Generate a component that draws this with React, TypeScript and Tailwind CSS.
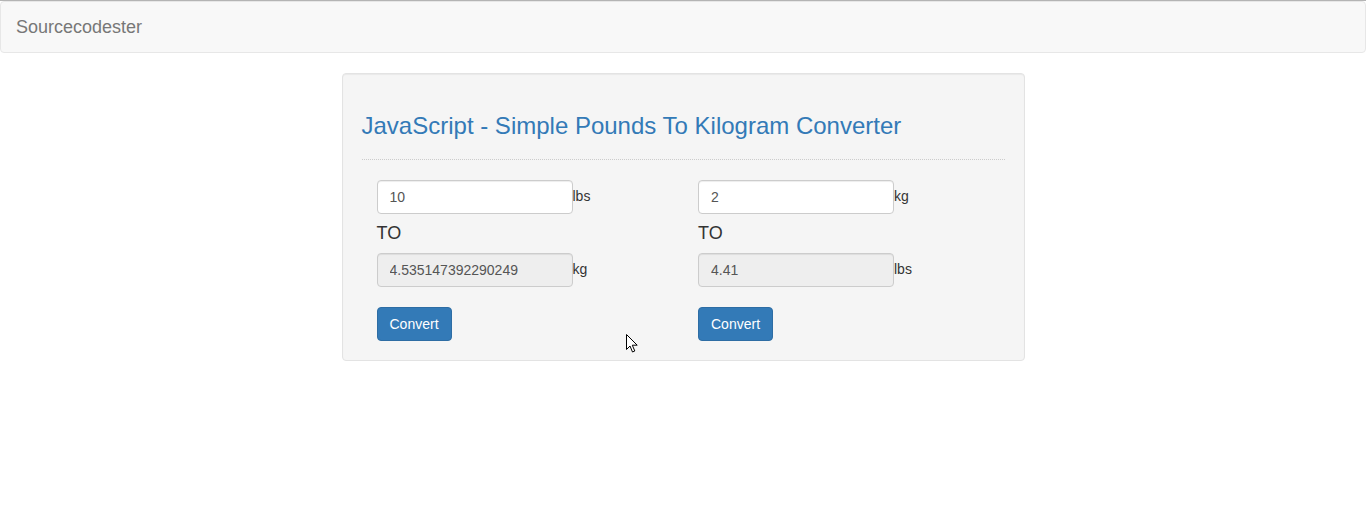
import { useState } from 'react';

type Side = {
  from: string;
  to: string;
  factor: number;
  initial: string;
  result: string;
};

const sides: Side[] = [
  { from: 'lbs', to: 'kg', factor: 0.45351473922902494, initial: '10', result: '4.535147392290249' },
  { from: 'kg', to: 'lbs', factor: 2.205, initial: '2', result: '4.41' },
];

function Converter({ side }: { side: Side }) {
  const [value, setValue] = useState(side.initial);
  const [result, setResult] = useState(side.result);

  const convert = () => {
    const n = parseFloat(value);
    if (isNaN(n)) return;
    setResult(String(n * side.factor));
  };

  return (
    <div className="px-[15px]">
      <div className="flex items-center">
        <input
          type="text"
          value={value}
          onChange={(e) => setValue(e.target.value)}
          className="h-[34px] w-[196px] rounded-[4px] border border-[#ccc] bg-white px-3 text-[14px] text-[#555] shadow-[inset_0_1px_1px_rgba(0,0,0,0.075)] focus:outline-none"
        />
        <span className="pb-[2px] text-[14px] text-[#333]">{side.from}</span>
      </div>
      <h4 className="my-[10px] text-[18px] leading-[19px] text-[#333]">TO</h4>
      <div className="flex items-center">
        <input
          type="text"
          value={result}
          disabled
          className="h-[34px] w-[196px] rounded-[4px] border border-[#ccc] bg-[#eee] px-3 text-[14px] text-[#555] shadow-[inset_0_1px_1px_rgba(0,0,0,0.075)]"
        />
        <span className="pb-[2px] text-[14px] text-[#333]">{side.to}</span>
      </div>
      <button
        type="button"
        onClick={convert}
        className="mt-5 h-[34px] rounded-[4px] border border-[#2e6da4] bg-[#337ab7] px-3 text-[14px] text-white"
      >
        Convert
      </button>
    </div>
  );
}

export default function App() {
  return (
    <div className="relative min-h-[532px] bg-white font-['Liberation_Sans',Arial,sans-serif] text-[14px] text-[#333]">
      <div className="h-px bg-[#b4b4b4]" />
      <nav className="flex h-[52px] items-center rounded-[4px] border border-[#e7e7e7] bg-[#f8f8f8] pl-[15px]">
        <span className="text-[18px] leading-5 text-[#777]">Sourcecodester</span>
      </nav>

      <div className="mx-auto mt-5 w-[683px] rounded-[4px] border border-[#e3e3e3] bg-[#f5f5f5] p-[19px] shadow-[inset_0_1px_1px_rgba(0,0,0,0.05)]">
        <h3 className="mt-5 text-[24px] leading-[1.1] text-[#337ab7]">
          JavaScript - Simple Pounds To Kilogram Converter
        </h3>
        <hr className="my-5 border-0 border-t border-dotted border-[#ccc]" />
        <div className="grid grid-cols-2">
          {sides.map((s) => (
            <Converter key={s.from} side={s} />
          ))}
        </div>
      </div>

      {/* mouse pointer */}
      <svg
        className="absolute left-[626px] top-[334px]"
        width="13"
        height="20"
        viewBox="0 0 13 20"
      >
        <path
          d="M0.5 0.5 L0.5 15.5 L4 12 L6.5 18 L8.8 17 L6.3 11.2 L11.2 11.2 Z"
          fill="white"
          stroke="black"
          strokeWidth="1"
          strokeLinejoin="miter"
        />
      </svg>
    </div>
  );
}
